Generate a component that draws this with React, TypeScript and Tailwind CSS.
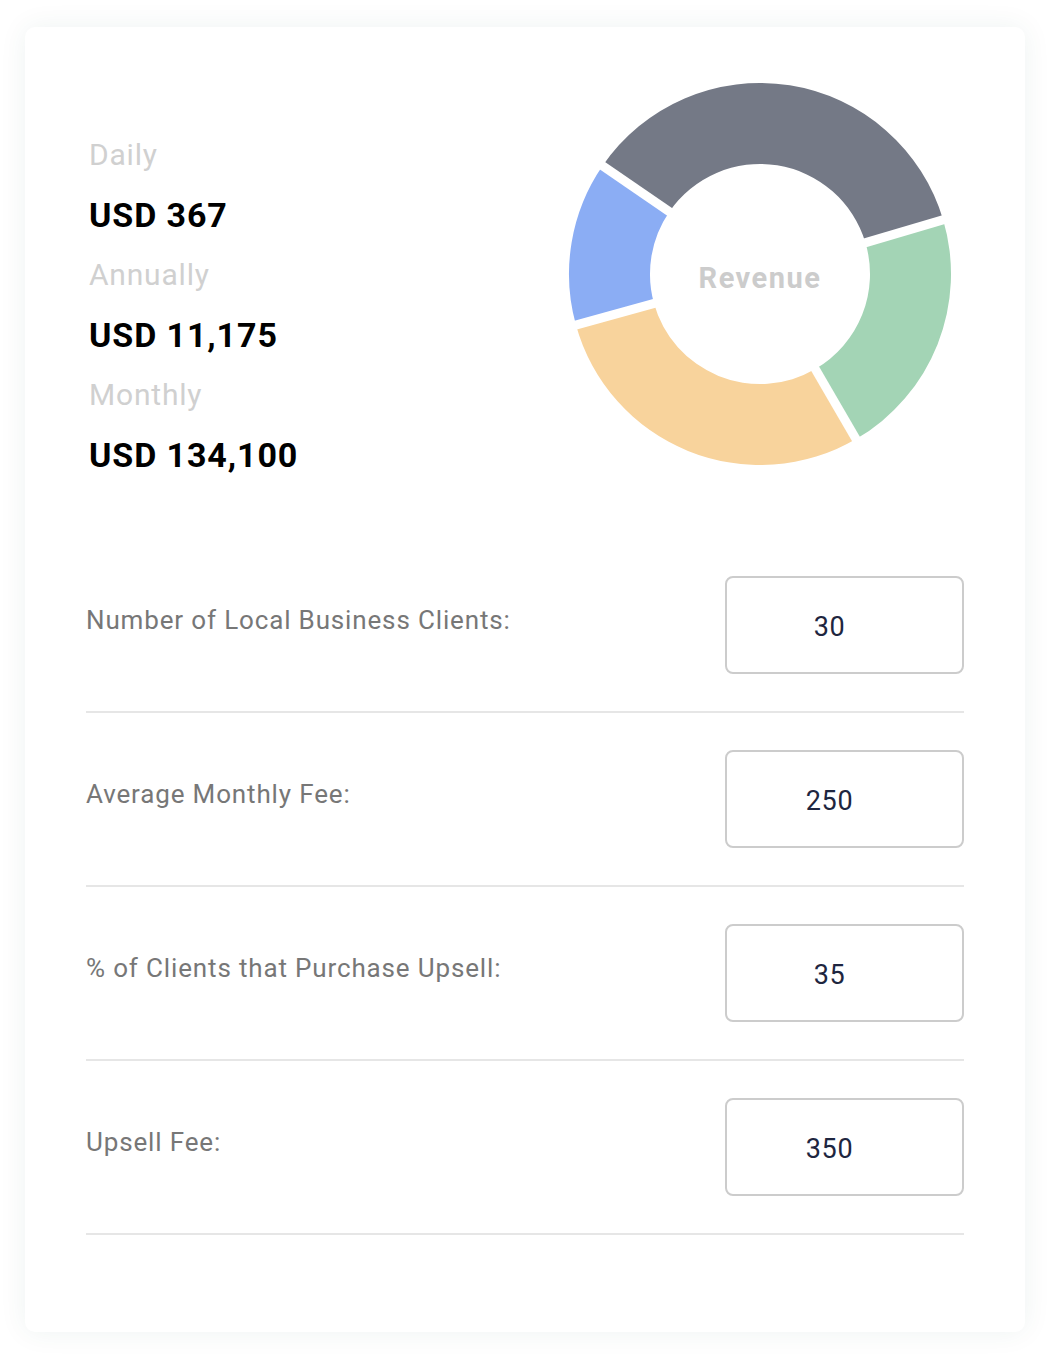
import React from "react";

const CX = 200;
const CY = 200;
const R_OUT = 191;
const R_IN = 110;

// clock angles (deg, from top, clockwise)
const slices = [
  { from: 304.5, to: 433.5, color: "#747986" },
  { from: 73.5, to: 149.8, color: "#a3d4b5" },
  { from: 149.8, to: 254.5, color: "#f8d39c" },
  { from: 254.5, to: 304.5, color: "#8badf4" },
];

const pt = (a: number, r: number) => {
  const rad = (a * Math.PI) / 180;
  return [CX + r * Math.sin(rad), CY - r * Math.cos(rad)];
};

const arcPath = (from: number, to: number) => {
  const large = to - from > 180 ? 1 : 0;
  const [x1, y1] = pt(from, R_OUT);
  const [x2, y2] = pt(to, R_OUT);
  const [x3, y3] = pt(to, R_IN);
  const [x4, y4] = pt(from, R_IN);
  return `M${x1} ${y1} A${R_OUT} ${R_OUT} 0 ${large} 1 ${x2} ${y2} L${x3} ${y3} A${R_IN} ${R_IN} 0 ${large} 0 ${x4} ${y4} Z`;
};

const Donut = () => (
  <div className="relative w-[400px] h-[400px]">
    <svg width="400" height="400" viewBox="0 0 400 400">
      {slices.map((s, i) => (
        <path key={i} d={arcPath(s.from, s.to)} fill={s.color} />
      ))}
      {slices.map((s, i) => {
        const [x1, y1] = pt(s.from, R_IN - 5);
        const [x2, y2] = pt(s.from, R_OUT + 5);
        return <line key={"g" + i} x1={x1} y1={y1} x2={x2} y2={y2} stroke="#fff" strokeWidth="9" />;
      })}
    </svg>
    <div className="absolute inset-0 flex items-center justify-center pt-[9px] text-[29px] tracking-[1.5px] font-bold text-[#cccccc]">
      Revenue
    </div>
  </div>
);

const stats = [
  { label: "Daily", value: "USD 367" },
  { label: "Annually", value: "USD 11,175" },
  { label: "Monthly", value: "USD 134,100" },
];

const fields = [
  { label: "Number of Local Business Clients:", value: "30" },
  { label: "Average Monthly Fee:", value: "250" },
  { label: "% of Clients that Purchase Upsell:", value: "35" },
  { label: "Upsell Fee:", value: "350" },
];

export default function App() {
  return (
    <div className="min-h-[1360px] bg-white pt-[27px] pl-[25px]" style={{ fontFamily: "Roboto, 'Noto Sans', sans-serif" }}>
      <div className="w-[1000px] h-[1305px] bg-white rounded-[10px] shadow-[0_0_28px_rgba(30,90,70,0.07)] px-[61px]">
        <div className="flex justify-between">
          <div className="pt-[98px] pl-[3px]">
            {stats.map((s) => (
              <div key={s.label}>
                <div className="h-[60px] leading-[60px] text-[30px] tracking-[0.8px] text-[#d0d0d0]">{s.label}</div>
                <div className="h-[60px] leading-[60px] text-[34px] tracking-[0.9px] font-bold text-black">{s.value}</div>
              </div>
            ))}
          </div>
          <div className="mt-[47px] mr-[4px]">
            <Donut />
          </div>
        </div>

        <div className="mt-[54px]">
          {fields.map((f) => (
            <div key={f.label} className="flex justify-between items-start pt-[37px] pb-[37px] border-b-2 border-[#e6e6e6]">
              <div className="mt-[29px] leading-[30px] text-[26px] tracking-[0.85px] text-[#777777]">{f.label}</div>
              <div className="w-[239px] h-[98px] border-2 border-[#cccccc] rounded-[8px] flex items-center justify-center pr-[30px] pt-[4px] text-[27px] tracking-[0.7px] text-[#1e2640]">
                {f.value}
              </div>
            </div>
          ))}
        </div>
      </div>
    </div>
  );
}
